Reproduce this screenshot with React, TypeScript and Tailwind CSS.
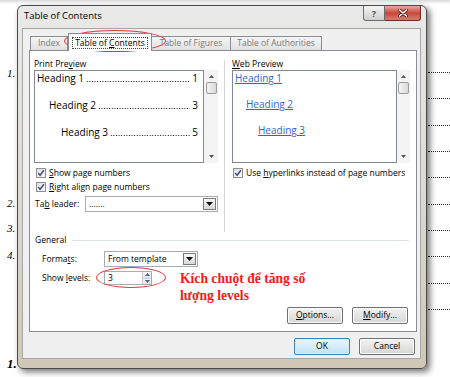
import React from 'react';

function Check() {
  return (
    <span className="flex h-[10px] w-[10px] shrink-0 items-center justify-center border border-[#8e8f8f] bg-gradient-to-br from-[#dedede] to-white">
      <svg viewBox="0 0 8 8" className="h-[8px] w-[8px]">
        <path d="M1.3 4.1 L3.1 6.3 L6.9 1.3" fill="none" stroke="#3b4f8f" strokeWidth="1.5" />
      </svg>
    </span>
  );
}

function DownTri() {
  return (
    <svg viewBox="0 0 7 4" className="h-[4px] w-[7px]">
      <path d="M0 0H7L3.5 4Z" fill="#111" />
    </svg>
  );
}

function DropBtn() {
  return (
    <span className="flex h-full w-[13px] shrink-0 items-center justify-center border border-[#7a7a7a] bg-gradient-to-b from-[#f7f7f7] to-[#d9d9d9]">
      <DownTri />
    </span>
  );
}

function Scroll({ className }: { className: string }) {
  return (
    <div className={`flex flex-col items-center bg-[#f4f4f4] ${className}`}>
      <svg viewBox="0 0 5 3" className="mt-[5px] h-[3px] w-[5px]">
        <path d="M0 3H5L2.5 0Z" fill="#555" />
      </svg>
      <div className="mt-[4px] h-[12px] w-[11px] rounded-[2px] border border-[#9b9b9b] bg-gradient-to-r from-[#f3f3f3] to-[#dadada]" />
      <div className="flex-1" />
      <svg viewBox="0 0 5 3" className="mb-[5px] h-[3px] w-[5px]">
        <path d="M0 0H5L2.5 3Z" fill="#555" />
      </svg>
    </div>
  );
}

function TocLine({ label, page, className }: { label: string; page: string; className: string }) {
  return (
    <div className={`flex h-[14px] items-center whitespace-nowrap ${className}`}>
      <span>{label}</span>
      {/* tab leader dots */}
      <span className="mx-[2px] mt-[7px] h-[3px] flex-1 bg-[radial-gradient(circle,#222_0.6px,transparent_0.9px)] bg-[length:2.6px_3px] bg-repeat-x" />
      <span>{page}</span>
    </div>
  );
}

function Btn({ children, primary }: { children: React.ReactNode; primary?: boolean }) {
  return (
    <div
      className={
        primary
          ? 'flex h-[17px] w-[56px] items-center justify-center rounded-[2px] border border-[#3c7fb1] bg-gradient-to-b from-[#eaf6fd] to-[#bfe3f6] shadow-[inset_0_0_0_1px_#d8effc]'
          : 'flex h-[17px] w-[56px] items-center justify-center rounded-[2px] border border-[#707070] bg-gradient-to-b from-[#f3f3f3] to-[#d6d6d6] shadow-[inset_0_0_0_1px_#fcfcfc]'
      }
    >
      {children}
    </div>
  );
}

export default function App() {
  const dotRows = Array.from({ length: 10 });
  return (
    <div className="relative h-[377px] w-[450px] overflow-hidden bg-white font-['Open_Sans',sans-serif] text-[8.5px] text-black">
      {/* document behind the dialog */}
      <div className="absolute inset-x-0 top-0 h-[4px] bg-gradient-to-b from-[#d9d9d9] to-white" />
      <div className="flex h-full">
        <div className="flex w-[20px] flex-col pl-[7px] font-['Liberation_Serif',serif] text-[11px] italic leading-[14px]">
          <div className="mt-[66px]">1.</div>
          <div className="mt-[116px]">2.</div>
          <div className="mt-[11px]">3.</div>
          <div className="mt-[13px]">4.</div>
          <div className="mt-[95px] text-[13px] font-bold">1.</div>
        </div>
        <div className="flex-1" />
        <div className="flex w-[22px] flex-col pt-[72px]">
          {dotRows.map((_, i) => (
            <div key={i} className="h-[26.33px] border-t border-dotted border-[#222]" />
          ))}
        </div>
      </div>

      {/* dialog window */}
      <div className="absolute left-[17px] top-[5px] flex h-[364px] w-[410px] flex-col rounded-[6px] border border-[#4a4a4a] bg-gradient-to-b from-[#e9e9e9] via-[#dedad2] to-[#cfc6b4] shadow-[3px_3px_6px_rgba(0,0,0,0.55)]">
        <div className="flex h-[22px] items-start justify-between pr-[5px]">
          <div className="pl-[6px] pt-[4px] text-[9.5px] leading-[12px]">Table of Contents</div>
          <div className="flex">
            <div className="flex h-[15px] w-[22px] items-center justify-center rounded-bl-[3px] border border-t-0 border-[#6d6d6d] bg-gradient-to-b from-[#f4f4f4] to-[#cfcfcf] text-[9px] font-bold leading-none text-[#555]">
              ?
            </div>
            <div className="flex h-[15px] w-[36px] items-center justify-center rounded-br-[3px] border border-l-0 border-t-0 border-[#6d2b2b] bg-gradient-to-b from-[#e7a9a0] via-[#c9463a] to-[#d77b6c]">
              <svg viewBox="0 0 10 8" className="h-[8px] w-[10px]">
                <path d="M1.5 1 L8.5 7 M8.5 1 L1.5 7" stroke="#4b1e1e" strokeWidth="3" strokeLinecap="round" />
                <path d="M1.5 1 L8.5 7 M8.5 1 L1.5 7" stroke="#fff" strokeWidth="1.6" strokeLinecap="round" />
              </svg>
            </div>
          </div>
        </div>

        {/* client area */}
        <div className="ml-[4px] flex h-[331px] w-[399px] flex-col border border-[#a7a7a7] bg-[#f0f0f0]">
          {/* tab strip */}
          <div className="mt-[4px] flex h-[17px] items-end pl-[7px]">
            <div className="flex h-[14px] w-[38px] items-center justify-center border border-b-0 border-[#898c95] bg-gradient-to-b from-[#f5f5f5] to-[#e1e1e1] text-[#7b7b7b]">
              Index
            </div>
            <div className="relative z-10 -mb-px flex h-[18px] w-[84px] items-center justify-center border border-b-0 border-[#898c95] bg-white">
              <span className="border border-dotted border-[#444] px-[2px] leading-[10px]">
                Table of <u>C</u>ontents
              </span>
            </div>
            <div className="flex h-[14px] w-[79px] items-center justify-center border border-b-0 border-l-0 border-[#898c95] bg-gradient-to-b from-[#f5f5f5] to-[#e1e1e1] text-[#7b7b7b]">
              Table of Figures
            </div>
            <div className="flex h-[14px] w-[91px] items-center justify-center border border-b-0 border-l-0 border-[#898c95] bg-gradient-to-b from-[#f5f5f5] to-[#e1e1e1] text-[#7b7b7b]">
              Table of Authorities
            </div>
          </div>

          {/* tab panel */}
          <div className="ml-[6px] flex h-[282px] w-[388px] flex-col border border-[#898c95] bg-white pt-[7px]">
            <div className="flex h-[174px]">
              {/* print preview */}
              <div className="ml-[4px] flex w-[184px] flex-col">
                <div className="h-[12px] leading-[12px]">
                  Print Pre<u>v</u>iew
                </div>
                <div className="flex h-[93px]">
                  <div className="flex w-[170px] flex-col gap-[13px] border border-[#828790] bg-white pl-[2px] pr-[5px] text-[10px]">
                    <TocLine label="Heading 1" page="1" className="pl-0" />
                    <TocLine label="Heading 2" page="3" className="pl-[12px]" />
                    <TocLine label="Heading 3" page="5" className="pl-[24px]" />
                  </div>
                  <Scroll className="w-[14px]" />
                </div>
                <div className="mt-[3px] flex h-[14px] items-center gap-[3px] pl-[2px]">
                  <Check />
                  <span>
                    <u>S</u>how page numbers
                  </span>
                </div>
                <div className="flex h-[14px] items-center gap-[3px] pl-[2px]">
                  <Check />
                  <span>
                    <u>R</u>ight align page numbers
                  </span>
                </div>
                <div className="mt-[2px] flex h-[16px] items-center">
                  <span className="w-[51px] pl-[1px]">
                    Ta<u>b</u> leader:
                  </span>
                  <div className="flex h-full flex-1 items-center border border-[#a5acb5] bg-white p-px pl-[3px]">
                    <span className="flex-1 leading-none">.......</span>
                    <DropBtn />
                  </div>
                </div>
              </div>

              {/* divider */}
              <div className="ml-[6px] mt-[2px] w-px bg-[#d5d5d5]" />

              {/* web preview */}
              <div className="ml-[7px] flex w-[178px] flex-col">
                <div className="h-[12px] leading-[12px]">
                  <u>W</u>eb Preview
                </div>
                <div className="flex h-[93px]">
                  <div className="flex w-[165px] flex-col gap-[12px] border border-[#828790] bg-white pl-[2px] text-[10px] text-[#2a69c8] underline">
                    <div className="h-[14px] leading-[14px]">Heading 1</div>
                    <div className="h-[14px] pl-[11px] leading-[14px]">Heading 2</div>
                    <div className="h-[14px] pl-[23px] leading-[14px]">Heading 3</div>
                  </div>
                  <Scroll className="w-[13px]" />
                </div>
                <div className="mt-[3px] flex h-[14px] items-center gap-[3px] pl-[1px]">
                  <Check />
                  <span className="whitespace-nowrap">
                    Use <u>h</u>yperlinks instead of page numbers
                  </span>
                </div>
              </div>
            </div>

            {/* general group */}
            <div className="mt-[2px] flex h-[12px] items-center pl-[5px] pr-[7px]">
              <span className="leading-[12px]">General</span>
              <div className="ml-[6px] h-px flex-1 bg-[#dde2e6]" />
            </div>
            <div className="mt-[5px] flex h-[16px] items-center pl-[12px]">
              <span className="w-[62px]">
                Forma<u>t</u>s:
              </span>
              <div className="flex h-full w-[94px] items-center border border-[#a5acb5] bg-white p-px pl-[3px]">
                <span className="flex-1 leading-none">From template</span>
                <DropBtn />
              </div>
            </div>
            <div className="mt-[3px] flex items-start pl-[12px]">
              <div className="flex items-center pt-px">
                <span className="w-[62px]">
                  Show <u>l</u>evels:
                </span>
                <div className="flex h-[14px] w-[48px] items-center border border-[#a5acb5] bg-white pl-[3px]">
                  <span className="flex-1 leading-none">3</span>
                  <div className="flex h-full w-[9px] flex-col border-l border-[#c9cdd2]">
                    <div className="flex flex-1 items-center justify-center bg-gradient-to-b from-[#f4f6f8] to-[#dfe4ea]">
                      <svg viewBox="0 0 5 3" className="h-[3px] w-[5px]">
                        <path d="M0 3H5L2.5 0Z" fill="#4d6185" />
                      </svg>
                    </div>
                    <div className="flex flex-1 items-center justify-center border-t border-[#c9cdd2] bg-gradient-to-b from-[#f4f6f8] to-[#dfe4ea]">
                      <svg viewBox="0 0 5 3" className="h-[3px] w-[5px]">
                        <path d="M0 0H5L2.5 3Z" fill="#4d6185" />
                      </svg>
                    </div>
                  </div>
                </div>
              </div>
              <div className="ml-[28px] font-['Liberation_Serif',serif] text-[13.6px] font-bold leading-[17px] text-[#f41a1a]">
                <div>Kích chuột để tăng số</div>
                <div>lượng levels</div>
              </div>
            </div>
            <div className="mt-auto flex justify-end gap-[9px] pb-[7px] pr-[8px]">
              <Btn>
                <u>O</u>ptions...
              </Btn>
              <Btn>
                <u>M</u>odify...
              </Btn>
            </div>
          </div>

          {/* dialog buttons */}
          <div className="mt-[6px] flex justify-end gap-[9px] pr-[5px]">
            <Btn primary>OK</Btn>
            <Btn>Cancel</Btn>
          </div>
        </div>
      </div>

      {/* annotation ellipses */}
      <div className="pointer-events-none absolute left-[64px] top-[30px] h-[22px] w-[102px] rounded-[50%] border border-[#e23a3a]" />
      <div className="pointer-events-none absolute left-[96px] top-[267px] h-[21px] w-[70px] rounded-[50%] border border-[#e23a3a]" />
    </div>
  );
}
